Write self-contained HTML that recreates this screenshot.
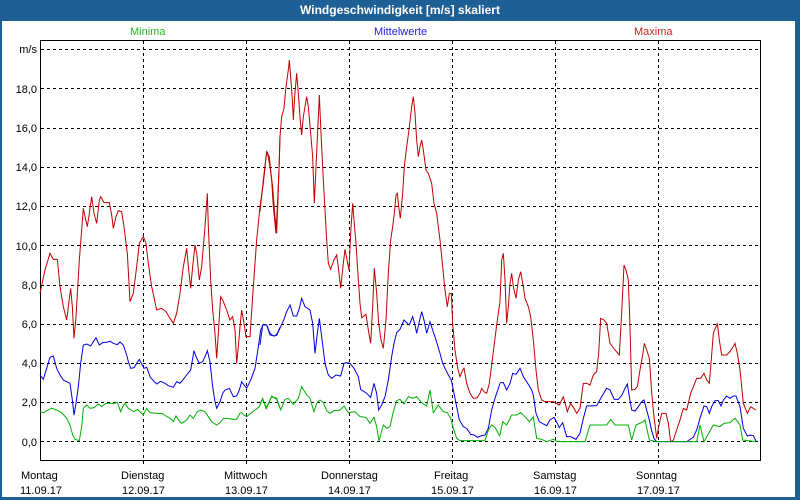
<!DOCTYPE html>
<html><head><meta charset="utf-8"><style>
html,body{margin:0;padding:0;background:#1e5f96;}
#w{position:relative;width:800px;height:500px;overflow:hidden;background:#1e5f96;font-family:"Liberation Sans",sans-serif;}
#t{position:absolute;left:0;top:0;width:800px;height:20px;line-height:20px;text-align:center;color:#fff;font-weight:bold;font-size:12px;}
#c{position:absolute;left:2px;top:21px;width:793px;height:476px;background:#fff;}
svg{position:absolute;left:0;top:0;}
</style></head><body><div id="w">
<div id="t">Windgeschwindigkeit [m/s] skaliert</div>
<div id="c"></div>
<svg width="800" height="500" font-family="Liberation Sans, sans-serif" font-size="11">
<g stroke="#000" stroke-dasharray="3,3" stroke-width="1">
<path d="M41 49.5H760M41 88.5H760M41 128.5H760M41 167.5H760M41 206.5H760M41 245.5H760M41 285.5H760M41 324.5H760M41 363.5H760M41 402.5H760M41 441.5H760"/>
<path d="M143.5 41V466M246.5 41V466M349.5 41V466M452.5 41V466M555.5 41V466M658.5 41V466"/>
</g>
<rect x="40.5" y="40.5" width="720" height="420" fill="none" stroke="#000"/>
<g text-anchor="end" fill="#000">
<text x="37" y="53">m/s</text><text x="37" y="93">18,0</text><text x="37" y="132">16,0</text><text x="37" y="171">14,0</text><text x="37" y="210">12,0</text><text x="37" y="250">10,0</text><text x="37" y="289">8,0</text><text x="37" y="328">6,0</text><text x="37" y="367">4,0</text><text x="37" y="406">2,0</text><text x="37" y="446">0,0</text>
</g>
<text x="130" y="35" fill="#22bb22">Minima</text>
<text x="374" y="35" fill="#2222dd">Mittelwerte</text>
<text x="634" y="35" fill="#cc2222">Maxima</text>
<g fill="#000">
<text x="21" y="479">Montag</text><text x="20" y="494">11.09.17</text>
<text x="121" y="479">Dienstag</text><text x="122" y="494">12.09.17</text>
<text x="224" y="479">Mittwoch</text><text x="225" y="494">13.09.17</text>
<text x="321" y="479">Donnerstag</text><text x="328" y="494">14.09.17</text>
<text x="434" y="479">Freitag</text><text x="431" y="494">15.09.17</text>
<text x="533" y="479">Samstag</text><text x="534" y="494">16.09.17</text>
<text x="636" y="479">Sonntag</text><text x="637" y="494">17.09.17</text>
</g>
<g fill="none" stroke-width="1" vector-effect="non-scaling-stroke">
<g transform="translate(40,40) scale(0.33333)">
<polyline vector-effect="non-scaling-stroke" stroke="#c00000" points="0,760 15,690 30,640 40,658 52,658 60,740 70,800 80,840 85,800 92,745 97,800 102,895 108,830 118,660 125,570 130,505 135,530 142,560 148,520 155,470 162,520 170,550 178,480 182,470 192,488 208,488 215,525 220,565 228,530 235,512 245,515 252,560 262,640 270,785 280,760 290,680 298,610 310,590 318,610 325,670 335,740 350,810 365,805 378,815 390,835 400,850 410,820 420,760 430,680 440,625 445,680 452,745 458,680 465,615 470,640 478,720 485,680 490,620 495,560 502,460 505,560 512,720 518,810 525,880 530,955 535,880 542,770 548,780 560,810 570,840 578,830 585,870 590,970 596,910 600,860 605,810 612,850 618,890 630,890 640,740 650,600 660,500 670,430 680,335 688,350 695,420 700,500 708,580 713,480 718,365 720,285"/>
<polyline vector-effect="non-scaling-stroke" stroke="#0000e0" points="0,1005 10,1018 20,985 30,952 40,948 50,985 60,1005 70,1020 80,1025 90,1030 97,1080 102,1125 108,1090 115,1040 122,970 130,915 140,912 152,918 160,905 168,893 178,915 188,908 198,907 210,904 220,910 232,914 240,906 250,915 260,945 265,965 272,985 282,983 290,970 298,958 305,972 312,985 320,982 330,1010 340,1022 350,1032 362,1024 375,1030 385,1037 400,1042 410,1025 420,1030 430,1018 440,1005 452,990 462,932 468,950 478,970 488,965 495,950 502,932 510,965 518,1040 525,1085 530,1105 540,1085 548,1060 555,1050 568,1045 580,1070 590,1068 598,1050 605,1025 612,1035 620,1045 632,1020 645,985 655,920 662,870 670,853 680,855 690,885 705,888 712,880 720,862"/>
<polyline vector-effect="non-scaling-stroke" stroke="#00b000" points="0,1115 10,1118 20,1112 35,1105 50,1110 65,1118 80,1135 90,1155 98,1185 105,1198 118,1202 125,1160 130,1105 140,1095 150,1105 162,1103 175,1092 185,1100 198,1090 210,1090 222,1090 232,1087 242,1115 248,1100 255,1090 265,1105 282,1115 292,1108 300,1115 310,1125 320,1105 330,1118 350,1120 365,1120 378,1128 390,1135 400,1145 408,1128 415,1140 425,1150 440,1140 450,1125 460,1135 472,1115 482,1110 495,1115 505,1130 515,1145 530,1155 540,1148 550,1135 565,1135 578,1138 590,1138 600,1120 605,1118 612,1125 620,1130 632,1120 645,1110 658,1100 668,1075 678,1105 685,1090 695,1070 710,1075 720,1105"/>
</g>
<g transform="translate(260,40) scale(0.33333)">
<polyline vector-effect="non-scaling-stroke" stroke="#c00000" points="0,515 10,420 18,350 22,335 30,380 38,440 45,530 50,580 55,450 60,290 65,230 72,205 78,140 85,90 88,60 92,110 97,180 100,240 104,170 110,100 115,160 120,230 125,285 130,230 140,170 145,200 152,280 158,350 163,490 168,380 175,230 178,165 183,280 190,420 200,600 205,670 212,688 222,660 230,645 236,690 242,745 250,670 255,628 262,665 267,690 272,580 278,490 282,540 288,610 295,720 300,790 305,833 318,823 325,870 332,910 338,800 343,685 350,760 356,850 363,900 370,925 378,840 385,700 392,600 398,560 403,520 408,465 412,460 416,500 421,535 428,460 433,380 440,320 447,270 455,200 460,170 465,220 470,300 475,350 480,320 485,300 490,330 498,390 505,400 515,430 522,490 530,520 540,600 548,680 555,750 562,800 568,760 574,760 578,850 585,930 593,985 600,1010 608,990 612,985 620,1030 630,1060 640,1075 652,1073 660,1060 665,1045 672,1055 680,1060 688,1030 695,975 705,895 712,840 720,785"/>
<polyline vector-effect="non-scaling-stroke" stroke="#0000e0" points="0,915 8,855 20,855 30,880 40,888 50,886 62,860 72,838 80,815 90,795 100,828 110,828 118,805 125,775 135,800 150,810 158,850 165,940 172,880 178,835 185,890 195,970 205,1005 215,1015 228,1005 242,1008 252,970 260,968 270,970 282,985 295,1010 302,1048 320,1060 332,1072 342,1030 350,1060 356,1110 365,1095 375,1070 385,1020 395,950 402,910 410,878 420,868 432,840 440,848 448,855 458,830 465,855 470,880 478,845 485,815 492,840 500,880 510,845 518,870 528,900 540,940 548,970 555,985 565,1005 574,1020 580,1050 590,1100 598,1140 610,1160 620,1165 632,1183 642,1185 652,1192 665,1187 675,1185 685,1165 695,1110 705,1075 720,1030"/>
<polyline vector-effect="non-scaling-stroke" stroke="#00b000" points="0,1090 8,1078 20,1105 35,1068 50,1078 62,1110 75,1078 85,1075 100,1093 115,1075 125,1040 140,1065 150,1075 162,1115 170,1090 180,1080 190,1088 200,1112 210,1120 222,1112 240,1110 252,1098 265,1118 285,1115 300,1130 318,1132 330,1150 342,1132 350,1160 357,1203 370,1155 380,1165 390,1160 400,1115 410,1082 420,1078 432,1092 445,1070 458,1075 470,1070 485,1088 500,1098 510,1050 520,1118 535,1095 550,1115 562,1118 572,1135 580,1165 590,1195 600,1202 675,1202 685,1170 695,1155 705,1162 720,1190"/>
</g>
<g transform="translate(500,40) scale(0.33333)">
<polyline vector-effect="non-scaling-stroke" stroke="#c00000" points="0,785 5,660 10,640 15,720 20,850 25,800 30,730 35,700 40,740 48,775 55,720 62,695 70,740 75,775 85,800 92,830 100,900 108,990 115,1050 125,1080 135,1085 160,1085 178,1095 190,1070 202,1115 212,1090 222,1105 230,1120 240,1105 250,1030 260,1030 270,1035 280,1005 290,995 296,940 302,835 312,840 320,850 330,910 345,930 358,945 366,800 372,675 378,690 385,720 390,860 395,1050 405,1048 412,1040 420,990 428,945 433,910 440,930 448,955 456,1070 462,1130 470,1195 475,1165 485,1120 498,1120 505,1150 512,1205 520,1200 530,1170 540,1140 550,1105 560,1110 572,1060 580,1040 590,1015 602,1015 612,1000 620,1020 628,1030 633,970 640,880 648,860 652,850 658,900 665,945 680,945 690,935 700,920 705,910 712,940 720,990 730,1090 742,1120 752,1100 768,1110"/>
<polyline vector-effect="non-scaling-stroke" stroke="#0000e0" points="0,1028 10,1028 20,1050 30,1030 38,1000 48,1003 60,985 70,1010 85,1033 95,1050 100,1065 108,1120 118,1145 130,1152 140,1157 150,1140 162,1132 172,1150 178,1163 188,1148 200,1190 212,1190 228,1198 240,1180 250,1135 260,1098 290,1097 302,1075 320,1045 330,1050 343,1078 355,1078 366,1065 375,1045 382,1032 388,1070 395,1110 405,1113 415,1100 425,1085 432,1080 440,1110 448,1140 455,1172 462,1195 470,1205 560,1205 580,1192 590,1170 600,1135 612,1098 620,1100 628,1120 635,1100 645,1082 655,1082 663,1098 670,1080 680,1068 690,1075 700,1068 708,1068 720,1100 730,1165 742,1188 750,1185 760,1187 768,1203"/>
<polyline vector-effect="non-scaling-stroke" stroke="#00b000" points="0,1185 8,1145 20,1155 35,1125 50,1125 62,1118 75,1130 88,1145 100,1130 110,1195 125,1198 140,1205 160,1198 172,1205 255,1205 270,1155 320,1155 332,1138 345,1155 385,1155 395,1200 408,1155 430,1145 435,1140 448,1200 470,1205 590,1205 600,1155 612,1205 640,1155 660,1160 672,1150 690,1148 705,1135 720,1155 728,1200 768,1205"/>
</g>
</g>
</svg>
</div></body></html>
